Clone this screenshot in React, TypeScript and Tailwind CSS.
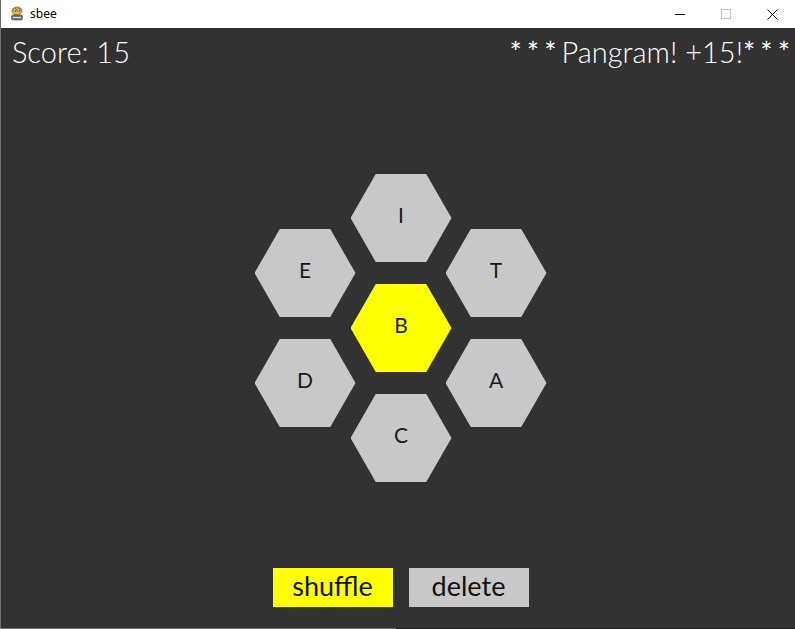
import React from 'react';

const hexClip = '[clip-path:polygon(0%_50%,25%_0%,75%_0%,100%_50%,75%_100%,25%_100%)]';

function Hex({ letter, center = false }: { letter: string; center?: boolean }) {
  return (
    <div
      className={`w-[101px] h-[88px] flex items-center justify-center pb-[6px] text-[21px] text-[#1a1a1a] ${hexClip} ${
        center ? 'bg-[#ffff00]' : 'bg-[#c8c8c8]'
      }`}
    >
      {letter}
    </div>
  );
}

function PygameIcon() {
  return (
    <svg width="16" height="16" viewBox="0 0 16 16">
      <ellipse cx="8" cy="5" rx="5" ry="4" fill="#e8c020" stroke="#806010" strokeWidth="0.8" />
      <circle cx="6" cy="4" r="1.6" fill="#fff" stroke="#333" strokeWidth="0.5" />
      <circle cx="10" cy="4" r="1.6" fill="#fff" stroke="#333" strokeWidth="0.5" />
      <circle cx="6.3" cy="4.2" r="0.6" fill="#000" />
      <circle cx="10.3" cy="4.2" r="0.6" fill="#000" />
      <rect x="2.5" y="9" width="11" height="5" rx="1.5" fill="#777" stroke="#444" strokeWidth="0.6" />
      <path d="M4 11.5h8" stroke="#ddd" strokeWidth="1" />
    </svg>
  );
}

export default function App() {
  return (
    <div className="w-[795px] h-[629px] flex flex-col bg-white overflow-hidden font-['Lato',sans-serif]">
      {/* title bar */}
      <div className="h-[28px] shrink-0 flex items-center bg-white border-l border-[#6e6e6e]">
        <div className="ml-[8px] flex items-center gap-[5px]">
          <PygameIcon />
          <span className="text-[12px] text-black font-['Noto_Sans',sans-serif]">sbee</span>
        </div>
        <div className="ml-auto flex items-center h-full text-black">
          <div className="w-[46px] h-full flex items-center justify-center">
            <div className="w-[10px] h-px bg-black" />
          </div>
          <div className="w-[46px] h-full flex items-center justify-center">
            <div className="w-[10px] h-[10px] border border-[#c4c4c4]" />
          </div>
          <div className="w-[46px] h-full flex items-center justify-center">
            <svg width="11" height="11" viewBox="0 0 11 11">
              <path d="M0.5 0.5L10.5 10.5M10.5 0.5L0.5 10.5" stroke="#000" strokeWidth="1" />
            </svg>
          </div>
        </div>
      </div>

      {/* game surface */}
      <div className="flex-1 flex flex-col bg-[#323232] border-l border-[#6e6e6e]">
        <div className="h-[41px] flex justify-between items-start pl-[11px] pr-[5px] pt-[7px] text-white text-[29px] leading-[34px] font-light whitespace-nowrap">
          <span>Score: 15</span>
          <span>
            <span className="tracking-[5px] font-normal">***</span>Pangram! +15!
            <span className="tracking-[5px] font-normal mr-[-5px]">***</span>
          </span>
        </div>

        <div className="flex justify-center pl-[5px] mt-[105px]">
          <div className="flex flex-col gap-[22px] mt-[55px]">
            <Hex letter="E" />
            <Hex letter="D" />
          </div>
          <div className="flex flex-col gap-[22px] -ml-[5px]">
            <Hex letter="I" />
            <Hex letter="B" center />
            <Hex letter="C" />
          </div>
          <div className="flex flex-col gap-[22px] mt-[55px] -ml-[6px]">
            <Hex letter="T" />
            <Hex letter="A" />
          </div>
        </div>

        <div className="flex justify-center gap-[16px] mt-[86px] pl-[5px]">
          <div className="w-[120px] h-[39px] bg-[#ffff00] text-[#111] text-[27px] leading-[36px] text-center">
            shuffle
          </div>
          <div className="w-[120px] h-[39px] bg-[#c8c8c8] text-[#111] text-[27px] leading-[36px] text-center">
            delete
          </div>
        </div>

        <div className="mt-auto flex h-px">
          <div className="w-[395px] bg-[#6e6e6e]" />
          <div className="flex-1 bg-[#1e1e1e]" />
        </div>
      </div>
    </div>
  );
}
